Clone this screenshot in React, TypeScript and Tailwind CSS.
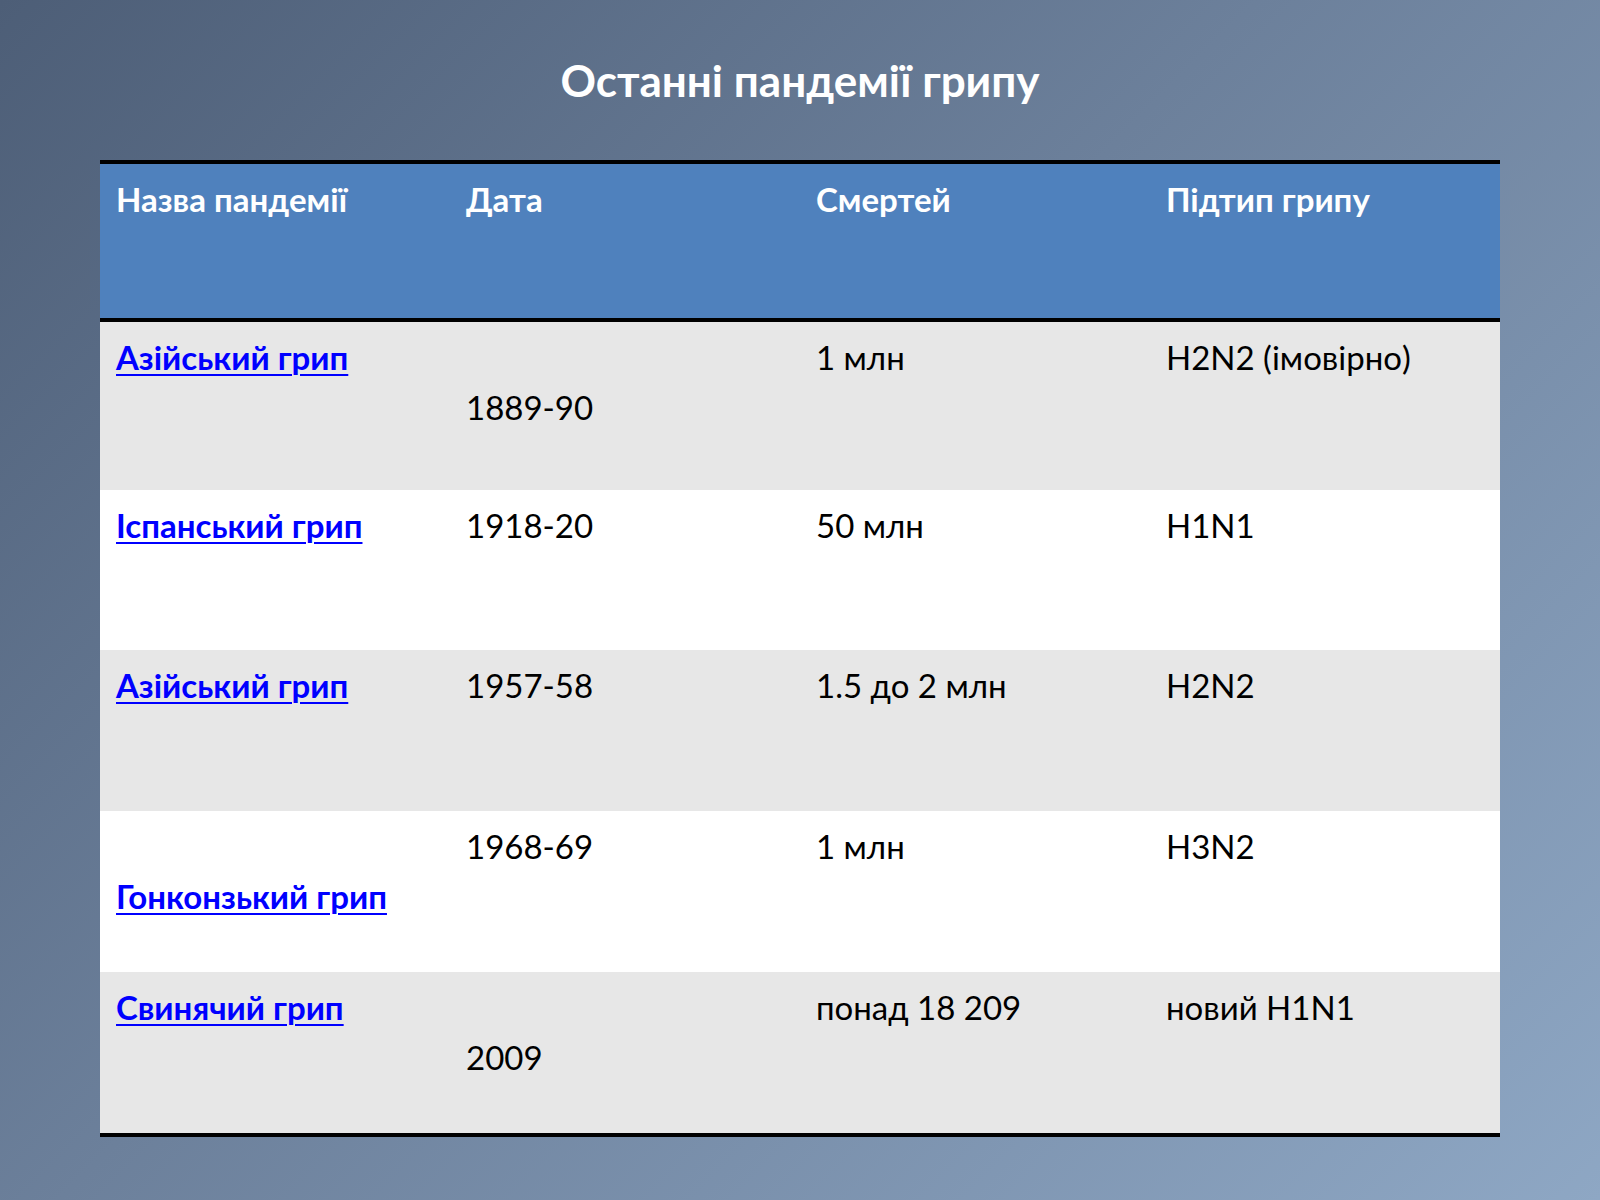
export default function App() {
  const rows: [string, string[], string[], string[], string[], string][] = [
    ["bg-[#e7e7e7]", ["Азійський грип"], ["", "1889-90"], ["1 млн"], ["H2N2 (імовірно)"], "h-[168px]"],
    ["bg-white", ["Іспанський грип"], ["1918-20"], ["50 млн"], ["H1N1"], "h-[160px]"],
    ["bg-[#e7e7e7]", ["Азійський грип"], ["1957-58"], ["1.5 до 2 млн"], ["H2N2"], "h-[161px]"],
    ["bg-white", ["", "Гонконзький грип"], ["1968-69"], ["1 млн"], ["H3N2"], "h-[161px]"],
    ["bg-[#e7e7e7]", ["Свинячий грип"], ["", "2009"], ["понад 18 209"], ["новий H1N1"], "h-[161px]"],
  ];
  const cell = (lines: string[], link = false) => (
    <div className="px-4 pt-[10px] leading-[50px]">
      {lines.map((l, i) =>
        l === "" ? <div key={i} className="h-[50px]" /> : link ? (
          <div key={i}><span className="text-[#0000ff] underline font-bold decoration-2 underline-offset-4">{l}</span></div>
        ) : <div key={i}>{l}</div>
      )}
    </div>
  );
  return (
    <div className="w-[1600px] h-[1200px] bg-[linear-gradient(135deg,#4d5e77_0%,#6c809b_45%,#8ea7c4_100%)] flex flex-col items-center" style={{ fontFamily: "Lato, 'Open Sans', sans-serif" }}>
      <h1 className="mt-[52px] h-[56px] text-[44px] font-bold text-white leading-[56px]">Останні пандемії грипу</h1>
      <div className="mt-[52px] w-[1400px] border-t-[4px] border-b-[4px] border-black text-[33px] text-black">
        <div className="grid grid-cols-4 h-[158px] bg-[#4f81bd] border-b-[4px] border-black text-white font-bold">
          {["Назва пандемії", "Дата", "Смертей", "Підтип грипу"].map((h) => (
            <div key={h} className="px-4 pt-[10px] leading-[50px]">{h}</div>
          ))}
        </div>
        {rows.map((r, i) => (
          <div key={i} className={`grid grid-cols-4 ${r[0]} ${r[5]}`}>
            {cell(r[1], true)}
            {cell(r[2])}
            {cell(r[3])}
            {cell(r[4])}
          </div>
        ))}
      </div>
    </div>
  );
}
